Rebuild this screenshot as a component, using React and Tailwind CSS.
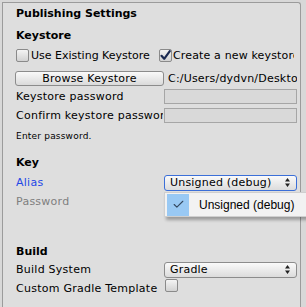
import { Check } from 'lucide-react'

const font = { fontFamily: '"DejaVu Sans", Verdana, sans-serif' }

function Checkbox({ checked }) {
  return (
    <span className="relative inline-block w-[13px] h-[13px] shrink-0 rounded-[2px] border border-[#8a8a8a] bg-gradient-to-b from-[#f4f4f4] to-[#d2d2d2]">
      {checked && (
        <svg viewBox="0 0 13 13" className="absolute -left-[1px] -top-[1px] w-[13px] h-[13px]">
          <path d="M2.5 6.8 L5.2 9.8 L10.8 2.2" fill="none" stroke="#1b2a52" strokeWidth="2.2" strokeLinecap="round" strokeLinejoin="round" />
        </svg>
      )}
    </span>
  )
}

function Arrows() {
  return (
    <svg viewBox="0 0 5 9" className="w-[5px] h-[9px]">
      <path d="M2.5 0 L5 3.5 L0 3.5 Z M2.5 9 L5 5.5 L0 5.5 Z" fill="#222" />
    </svg>
  )
}

function Popup({ value, focused }) {
  return (
    <div
      className={
        'w-[133px] h-[16px] flex items-center justify-between pl-[5px] pr-[6px] rounded-[3px] border bg-gradient-to-b from-[#fafafa] to-[#dcdcdc] text-[11px] text-black ' +
        (focused ? 'border-[#3b6fd8]' : 'border-[#8c8c8c]')
      }
    >
      <span className="leading-none tracking-[0.2px]">{value}</span>
      <Arrows />
    </div>
  )
}

function Field() {
  return <div className="w-[133px] h-[15px] border border-[#a6a6a6] bg-[#d9d9d9]" />
}

function Row({ className = '', children }) {
  return <div className={'flex items-center ' + className}>{children}</div>
}

function Label({ className = '', children }) {
  return (
    <span className={'w-[147px] mr-[1px] shrink-0 whitespace-nowrap overflow-hidden leading-none tracking-[0.25px] ' + className}>
      {children}
    </span>
  )
}

export default function App() {
  return (
    <div className="relative w-[306px] h-[307px] overflow-hidden bg-[#d8d8d8]" style={font}>
      <div className="ml-[2px] mt-[2px] w-[299px] h-[310px] border-l border-t border-r border-[#9b9b9b] rounded-tr-[3px] bg-[#dedede] text-[11px] text-black">
        <div className="flex flex-col pl-[13px]">
          <Row className="h-[18px] mt-[1px]">
            <span className="font-bold leading-none">Publishing Settings</span>
          </Row>
          <Row className="h-[18px] mt-[4px]">
            <span className="font-bold leading-none">Keystore</span>
          </Row>
          <Row className="h-[18px] mt-[2px]">
            <div className="w-[143px] flex items-center gap-[2px]">
              <Checkbox />
              <span className="whitespace-nowrap leading-none">Use Existing Keystore</span>
            </div>
            <div className="flex items-center gap-[1px] whitespace-nowrap overflow-hidden w-[135px]">
              <Checkbox checked />
              <span className="leading-none tracking-[0.15px]">Create a new keystore</span>
            </div>
          </Row>
          <Row className="h-[18px] mt-[5px]">
            <div className="w-[149px] h-[15px] -ml-[1px] mr-[4px] flex items-center justify-center rounded-[3px] border border-[#8c8c8c] bg-gradient-to-b from-[#fafafa] to-[#dadada]">
              <span className="leading-none tracking-[0.2px]">Browse Keystore</span>
            </div>
            <span className="whitespace-nowrap overflow-hidden w-[129px] leading-none tracking-[0.2px]">C:/Users/dydvn/Desktop</span>
          </Row>
          <Row className="h-[19px]">
            <Label>Keystore password</Label>
            <Field />
          </Row>
          <Row className="h-[19px]">
            <Label>Confirm keystore password</Label>
            <Field />
          </Row>
          <Row className="h-[19px] mt-[2px]">
            <span className="text-[9px] leading-none tracking-[0.2px]">Enter password.</span>
          </Row>
          <Row className="h-[18px] mt-[7px]">
            <span className="font-bold leading-none">Key</span>
          </Row>
          <Row className="h-[19px] mt-[2px]">
            <Label className="text-[#1f47e6]">Alias</Label>
            <Popup value="Unsigned (debug)" focused />
          </Row>
          <Row className="h-[19px]">
            <Label className="text-[#7f7f7f]">Password</Label>
          </Row>
          <Row className="h-[18px] mt-[31px]">
            <span className="font-bold leading-none">Build</span>
          </Row>
          <Row className="h-[19px]">
            <Label>Build System</Label>
            <Popup value="Gradle" />
          </Row>
          <Row className="h-[19px]">
            <Label>Custom Gradle Template</Label>
            <span className="ml-[1px]">
              <Checkbox />
            </span>
          </Row>
        </div>
      </div>

      <div className="absolute left-[164px] top-[192px] w-[150px] h-[25px] bg-[#f2f2f2] border border-[#cfcfcf] shadow-[2px_3px_3px_rgba(0,0,0,0.3)] flex items-center">
        <div className="ml-[2px] w-[22px] h-[22px] bg-[#99c9f4] flex items-center justify-center">
          <Check size={13} strokeWidth={2} color="#33475f" />
        </div>
        <span className="ml-[10px] text-[12px] text-black whitespace-nowrap" style={{ fontFamily: '"Liberation Sans", Arial, sans-serif' }}>
          Unsigned (debug)
        </span>
      </div>
    </div>
  )
}
